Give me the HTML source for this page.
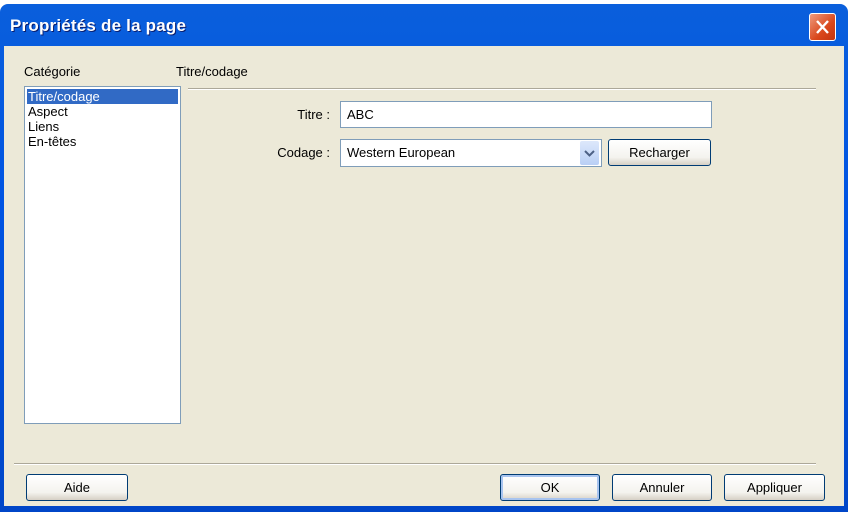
<!DOCTYPE html>
<html><head><meta charset="utf-8"><style>
body{margin:0;width:848px;height:512px;overflow:hidden;background:#fff;font-family:"Liberation Sans",sans-serif;font-size:13px;}
.win{position:absolute;left:0;top:4px;width:848px;height:508px;background:linear-gradient(#0a5fdc,#0054e3 40%,#0046c8);border-radius:8px 8px 0 0;}
.title{position:absolute;left:10px;top:12px;color:#fff;font-weight:bold;font-size:17px;text-shadow:1px 1px #0a1e6e;letter-spacing:0.2px}
.close{position:absolute;left:809px;top:9px;width:25px;height:26px;border:1px solid #fff;border-radius:3px;background:linear-gradient(135deg,#ee9a7d,#d9471c 60%,#c43410);}
.body{position:absolute;left:4px;top:42px;width:840px;height:460px;background:#ece9d8;}
.a{position:absolute}
.list{position:absolute;left:20px;top:40px;width:155px;height:336px;background:#fff;border:1px solid #7f9db9;}
.list div{height:15px;line-height:15px;padding-left:3px;}
.sel{background:#316ac5;color:#fff;margin:2px 2px 0 2px;padding-left:1px!important}
.inp{position:absolute;background:#fff;border:1px solid #7f9db9;box-sizing:border-box;padding-left:6px}
.btn{position:absolute;box-sizing:border-box;border:1px solid #003c74;border-radius:3px;background:linear-gradient(#fff,#f4f3ee 70%,#d6d0c5);text-align:center;}
</style></head><body>
<div class="win">
<div class="title">Propriétés de la page</div>
<div class="close"><svg width="25" height="26"><path d="M7 7L18 19M18 7L7 19" stroke="#fff" stroke-width="2.4"/></svg></div>
<div class="body">
<div class="a" style="left:20px;top:18px">Catégorie</div>
<div class="a" style="left:172px;top:18px">Titre/codage</div>
<div class="a" style="left:184px;top:42px;width:628px;height:1px;background:#aca899;border-bottom:1px solid #fff"></div>
<div class="list"><div class="sel">Titre/codage</div><div>Aspect</div><div>Liens</div><div>En-têtes</div></div>
<div class="a" style="left:0;width:326px;text-align:right;top:61px">Titre :</div>
<div class="inp" style="left:336px;top:55px;width:372px;height:27px;line-height:25px">ABC</div>
<div class="a" style="left:0;width:326px;text-align:right;top:99px">Codage :</div>
<div class="inp" style="left:336px;top:93px;width:262px;height:28px;line-height:26px">Western European
<div class="a" style="left:239px;top:1px;width:19px;height:24px;background:linear-gradient(#dde8fb,#b9cff5);border-radius:2px"><svg width="19" height="24"><path d="M5 10L9.5 14.5L14 10" stroke="#4d6185" stroke-width="2" fill="none"/></svg></div></div>
<div class="btn" style="left:604px;top:93px;width:103px;height:27px;line-height:25px">Recharger</div>
<div class="a" style="left:10px;top:417px;width:802px;height:1px;background:#aca899;border-bottom:1px solid #fff"></div>
<div class="btn" style="left:22px;top:428px;width:102px;height:27px;line-height:25px">Aide</div>
<div class="btn" style="left:496px;top:428px;width:100px;height:27px;line-height:25px;box-shadow:inset 0 0 0 2px #a8c4ef">OK</div>
<div class="btn" style="left:608px;top:428px;width:100px;height:27px;line-height:25px">Annuler</div>
<div class="btn" style="left:720px;top:428px;width:101px;height:27px;line-height:25px">Appliquer</div>
</div></div>
</body></html>
